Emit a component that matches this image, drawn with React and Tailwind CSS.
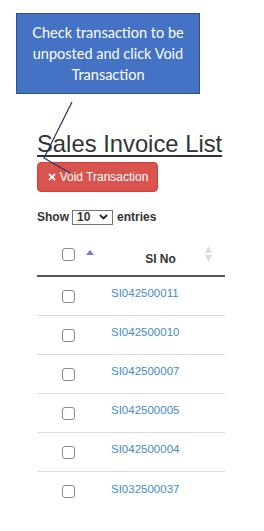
import React from 'react';
import { FaTimes } from 'react-icons/fa';

const rows = [
  'SI042500011',
  'SI042500010',
  'SI042500007',
  'SI042500005',
  'SI042500004',
  'SI032500037',
];

const Check = () => (
  <span className="block w-[13px] h-[13px] rounded-[3px] border border-[#8a8a8a] bg-white" />
);

const App = () => {
  return (
    <div
      className="relative w-[264px] h-[531px] overflow-hidden bg-white"
      style={{ fontFamily: '"Liberation Sans", Arial, sans-serif' }}
    >
      {/* callout */}
      <div
        className="ml-[16px] mt-[13px] w-[184px] h-[81px] border-[1.5px] border-[#2f528f] bg-[#4472c4] flex flex-col items-center justify-center text-white text-[14.5px] leading-[21px] text-center"
        style={{ fontFamily: 'Lato, "Open Sans", sans-serif' }}
      >
        <span>Check transaction to be</span>
        <span>unposted and click Void</span>
        <span>Transaction</span>
      </div>

      <div className="pl-[37px]">
        <h1 className="mt-[36px] text-[23.8px] leading-[28px] text-[#333] underline decoration-[2px] underline-offset-[3px] whitespace-nowrap">
          Sales Invoice List
        </h1>

        <button className="mt-[4px] w-[121px] h-[30px] rounded-[4px] bg-[#d9534f] border border-[#d43f3a] text-white text-[12px] flex items-center justify-center gap-[3px]">
          <FaTimes className="w-[10px] h-[10px]" />
          <span>Void Transaction</span>
        </button>

        <div className="mt-[17px] h-[16px] flex items-center text-[12px] font-bold text-[#333]">
          <span>Show</span>
          <div className="ml-[3px] w-[41px] h-[15px] border border-[#767676] flex items-center justify-between pl-[4px] pr-[4px]">
            <span className="leading-none">10</span>
            <svg width="9" height="6" viewBox="0 0 9 6">
              <path d="M1 1 L4.5 4.5 L8 1" fill="none" stroke="#222" strokeWidth="1.8" />
            </svg>
          </div>
          <span className="ml-[4px]">entries</span>
        </div>

        <div className="mt-[15px] w-[188px]">
          {/* header */}
          <div className="flex h-[37px] border-b-2 border-[#555]">
            <div className="relative w-[63px] flex justify-center pt-[8px]">
              <Check />
              <svg className="absolute left-[49px] top-[10px]" width="8" height="5" viewBox="0 0 8 5">
                <path d="M0 5 L4 0 L8 5 Z" fill="#7b7bd8" />
              </svg>
            </div>
            <div className="relative flex-1 flex justify-center pt-[12px] pr-[4px] text-[12px] font-bold text-[#333]">
              <span className="leading-[14px]">SI No</span>
              <svg className="absolute left-[105px] top-[6px]" width="7" height="16" viewBox="0 0 7 16">
                <path d="M0 7 L3.5 0 L7 7 Z" fill="#ddd" />
                <path d="M0 9 L3.5 16 L7 9 Z" fill="#ddd" />
              </svg>
            </div>
          </div>

          {rows.map((r, i) => (
            <div
              key={r}
              className={`flex h-[39px] items-center ${i < rows.length - 1 ? 'border-b border-[#ddd]' : ''}`}
            >
              <div className="w-[63px] flex justify-center">
                <Check />
              </div>
              <div className="flex-1 pl-[11px] pb-[4px] text-[11.5px] text-[#428bca]">
                {r}
              </div>
            </div>
          ))}
        </div>
      </div>

      {/* pointer line */}
      <svg className="absolute inset-0 pointer-events-none" width="264" height="531">
        <polyline points="72,102 44,158 70,173" fill="none" stroke="#1f3864" strokeWidth="1.2" />
      </svg>
    </div>
  );
};

export default App;
